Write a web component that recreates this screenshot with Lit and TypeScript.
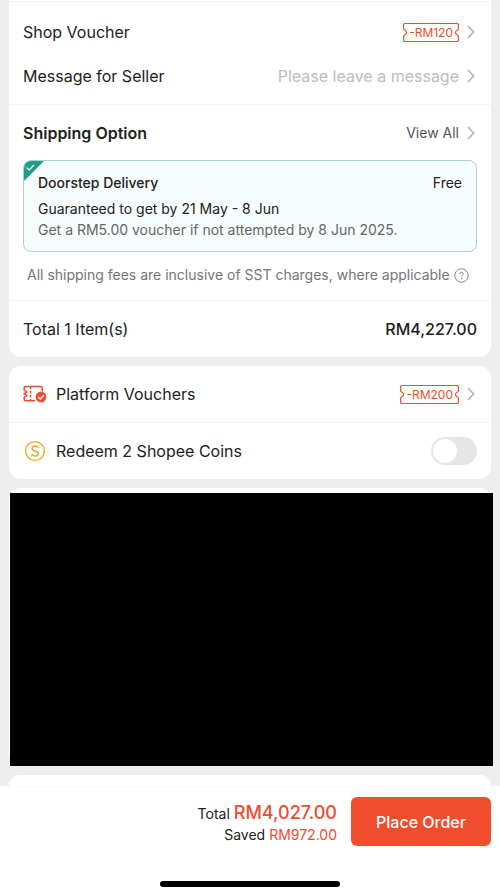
import { LitElement, html, css, svg } from "lit";
import { customElement, property } from "lit/decorators.js";

const chevron = html`<svg class="chevron" width="8" height="14" viewBox="0 0 8 14" fill="none" stroke="#b8b8b8" stroke-width="1.8" aria-hidden="true">
  <path d="M1 1L6.6 7L1 13" />
</svg>`;

@customElement("voucher-tag")
export class VoucherTag extends LitElement {
  static styles = css`
    :host {
      display: inline-flex;
      height: 19px;
      color: #ee4d2d;
      font-size: 12px;
      line-height: 17px;
    }
    svg {
      display: block;
      flex: none;
    }
    .flip {
      transform: scaleX(-1);
    }
    .amount {
      box-sizing: border-box;
      height: 19px;
      border-top: 1px solid;
      border-bottom: 1px solid;
    }
  `;

  render() {
    const cap = (cls: string) => html`<svg class=${cls} width="6" height="19" viewBox="0 0 6 19" fill="none" stroke="currentColor" aria-hidden="true">
      ${svg`<path d="M6 .5H2.2Q.6 .5 .6 2.1V5.4Q.6 6.4 1.6 7Q3.6 8.100 3.6 9.500T1.6 12Q.6 12.6 .6 13.600V16.900Q.6 18.500 2.200 18.500H6" stroke-width="1.2" />`}
    </svg>`;
    return html`${cap("cap")}<span class="amount"><slot></slot></span>${cap("cap flip")}`;
  }
}

@customElement("app-root")
export class AppRoot extends LitElement {
  @property() total = "RM4,027.00";

  static styles = css`
    :host {
      display: flex;
      flex-direction: column;
      min-height: 100vh;
      background: #eeeeee;
      color: #212121;
      font-family: Inter, "Liberation Sans", sans-serif;
      font-size: 16px;
      line-height: 20px;
    }
    * {
      box-sizing: border-box;
    }
    svg {
      display: block;
      flex: none;
    }
    main {
      flex: 1;
      display: flex;
      flex-direction: column;
      gap: 9px;
      padding: 0 9px;
    }
    .card {
      background: #fff;
      border-radius: 12px;
    }
    .first {
      border-radius: 0 0 12px 12px;
      padding-top: 1px;
    }
    .last {
      flex: 1;
      min-height: 11px;
      border-radius: 12px 12px 0 0;
    }
    .section {
      border-top: 1px solid #f5f5f5;
    }
    .plain > .section:first-child {
      border-top: 0;
    }
    .fields {
      padding: 8px 0 6px;
    }
    .row {
      display: flex;
      align-items: center;
      justify-content: space-between;
      gap: 8px;
      width: 100%;
      height: 44px;
      padding: 0 14px;
      border: 0;
      background: none;
      color: inherit;
      font: inherit;
      text-align: left;
    }
    .tall {
      height: 56px;
    }
    .heading {
      height: 55px;
    }
    .end {
      display: flex;
      align-items: center;
      gap: 8px;
    }
    .row .chevron {
      margin-right: 2px;
    }
    .message {
      flex: 1;
      min-width: 0;
      padding: 0;
      border: 0;
      outline: 0;
      background: none;
      color: inherit;
      font: inherit;
      text-align: right;
    }
    .message::placeholder {
      color: #bdbdbd;
      opacity: 1;
    }
    h2 {
      margin: 0;
      font-size: 16px;
      font-weight: 600;
    }
    .view {
      display: flex;
      align-items: center;
      gap: 8px;
      padding: 0;
      border: 0;
      background: none;
      color: #555;
      font: inherit;
      font-size: 14px;
    }
    .option {
      position: relative;
      display: grid;
      grid-template-columns: 1fr auto;
      margin: 0 14px;
      padding: 12px 14px 10px;
      border: 1px solid #a9d5cd;
      border-radius: 8px;
      overflow: hidden;
      background: #f7fdfc;
      font-size: 14px;
    }
    .option p {
      grid-column: 1 / -1;
      margin: 0;
    }
    .name {
      margin-bottom: 6px;
      font-weight: 500;
    }
    .option .muted {
      color: #666;
      line-height: 22px;
    }
    .corner {
      position: absolute;
      top: 0;
      left: 0;
    }
    .note {
      display: flex;
      align-items: center;
      justify-content: space-between;
      padding: 13px 22px 15px 18px;
      color: #757575;
      font-size: 14px;
    }
    .help {
      padding: 0;
      border: 0;
      background: none;
    }
    .strong {
      font-weight: 500;
    }
    .label {
      display: flex;
      align-items: center;
      gap: 9px;
    }
    .switch {
      appearance: none;
      width: 46px;
      height: 28px;
      margin: 0;
      padding: 2px;
      border-radius: 14px;
      background: #e6e6e6;
    }
    .switch::before {
      content: "";
      display: block;
      width: 24px;
      height: 24px;
      border-radius: 50%;
      background: #fff;
    }
    .switch:checked {
      background: #ee4d2d;
    }
    .switch:checked::before {
      margin-left: auto;
    }
    .hidden {
      padding-top: 5px;
    }
    .cover {
      height: 273px;
      margin: 0 -2px 0 1px;
      background: #000;
    }
    footer {
      border-top: 1px solid #fafafa;
      background: #fff;
    }
    .bar {
      display: flex;
      align-items: center;
      justify-content: flex-end;
      gap: 14px;
      padding: 10px 9px 0;
    }
    .sums {
      padding-top: 3px;
      font-size: 14px;
      line-height: 21px;
      text-align: right;
    }
    .price {
      color: #ee4d2d;
    }
    .big {
      font-size: 18px;
      font-weight: 500;
    }
    .order {
      width: 140px;
      height: 49px;
      padding: 0;
      border: 0;
      border-radius: 6px;
      background: #f04d2d;
      color: #fff;
      font: inherit;
      font-weight: 500;
    }
    .home {
      width: 180px;
      height: 6px;
      margin: 35px auto 9px;
      border-radius: 3px;
      background: #000;
    }
  `;

  render() {
    return html`
      <main>
        <section class="card first">
          <div class="section fields">
            <button class="row">
              <span>Shop Voucher</span>
              <span class="end"><voucher-tag>-RM120</voucher-tag>${chevron}</span>
            </button>
            <div class="row">
              <label for="message">Message for Seller</label>
              <input class="message" id="message" type="text" placeholder="Please leave a message" />
              ${chevron}
            </div>
          </div>
          <div class="section">
            <div class="row heading">
              <h2>Shipping Option</h2>
              <button class="view">View All ${chevron}</button>
            </div>
            <div class="option">
              <svg class="corner" width="20" height="20" viewBox="0 0 20 20" aria-hidden="true">
                <path d="M0 0H20L0 20Z" fill="#1f9d87" />
                <path d="M2.5 6.6L5.2 9L10 4" fill="none" stroke="#fff" stroke-width="1.2" />
              </svg>
              <span class="name">Doorstep Delivery</span>
              <span>Free</span>
              <p>Guaranteed to get by 21 May - 8 Jun</p>
              <p class="muted">Get a RM5.00 voucher if not attempted by 8 Jun 2025.</p>
            </div>
            <div class="note">
              <span>All shipping fees are inclusive of SST charges, where applicable</span>
              <button class="help" aria-label="About shipping fees">
                <svg width="15" height="15" viewBox="0 0 15 15" fill="none" stroke="#888" aria-hidden="true">
                  <circle cx="7.5" cy="7.5" r="6.7" />
                  <path d="M5.7 6.2Q5.7 4.3 7.5 4.3T9.3 6Q9.3 6.8 8.4 7.3Q7.5 7.8 7.5 8.8" />
                  <path d="M7.5 10V11.2" stroke-width="1.2" />
                </svg>
              </button>
            </div>
          </div>
          <div class="section">
            <div class="row tall">
              <span>Total 1 Item(s)</span>
              <span class="strong">RM4,227.00</span>
            </div>
          </div>
        </section>

        <section class="card plain">
          <div class="section">
            <button class="row tall">
              <span class="label">
                <svg width="24" height="18" viewBox="0 0 24 18" fill="none" stroke="#ee4d2d" stroke-width="1.5" aria-hidden="true">
                  <path d="M19.2 6.500V3Q19.200 1.600 17.800 1.600H2.400Q1.200 1.600 1.200 2.800V5.200L3.800 7L1.200 8.800L3.800 10.600L1.200 12.300V14.600Q1.200 15.800 2.400 15.800H12" />
                  <path d="M7.500 2V15.500" stroke-dasharray="2.6 1.4" />
                  <circle cx="18" cy="12" r="5.400" fill="#ee4d2d" stroke="none" />
                  <path d="M15.200 12L17.300 14L20.800 10.200" stroke="#fff" stroke-width="1.3" />
                </svg>
                Platform Vouchers
              </span>
              <span class="end"><voucher-tag>-RM200</voucher-tag>${chevron}</span>
            </button>
          </div>
          <div class="section">
            <div class="row tall">
              <label class="label" for="coins">
                <svg width="24" height="22" viewBox="0 0 24 22" fill="none" stroke="#f5a623" aria-hidden="true">
                  <circle cx="12" cy="11" r="9.400" stroke-width="1.4" />
                  <path d="M15.100 7.900Q14.200 5.900 12 5.900Q9 5.900 9 8.300Q9 10.200 12 10.900Q15.200 11.600 15.200 13.500Q15.200 16.100 12 16.100Q9.400 16.100 8.500 14" stroke-width="1.5" />
                </svg>
                Redeem 2 Shopee Coins
              </label>
              <input class="switch" id="coins" type="checkbox" role="switch" />
            </div>
          </div>
        </section>

        <section class="card hidden"><div class="cover"></div></section>
        <section class="card last"></section>
      </main>

      <footer>
        <div class="bar">
          <div class="sums">
            <div>Total <span class="price big">${this.total}</span></div>
            <div>Saved <span class="price">RM972.00</span></div>
          </div>
          <button class="order">Place Order</button>
        </div>
        <div class="home"></div>
      </footer>
    `;
  }
}
